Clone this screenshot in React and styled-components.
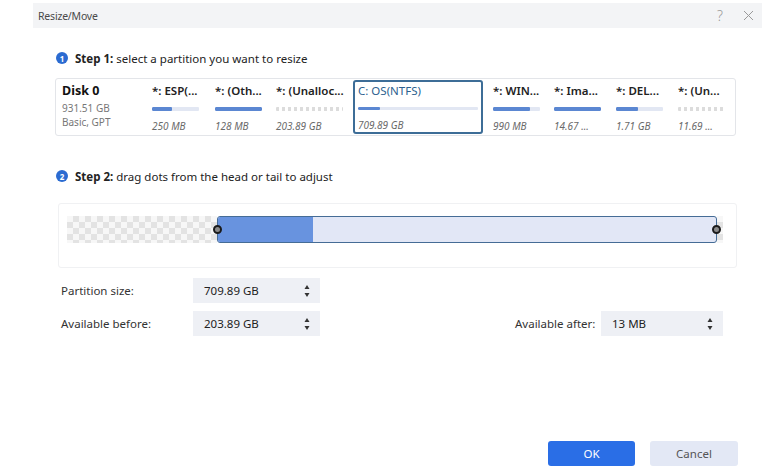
import React from "react";
import styled, { createGlobalStyle, css } from "styled-components";

const Global = createGlobalStyle`
  html, body { margin: 0; padding: 0; background: #fff; }
  body { font-family: "Noto Sans", "Open Sans", Arial, sans-serif; color: #222; }
  * { box-sizing: border-box; }
`;

const Dialog = styled.div`
  width: 768px;
  height: 475px;
  display: flex;
  flex-direction: column;
  background: #fff;
  overflow: hidden;
`;

const TitleBar = styled.div`
  margin: 3px 6px 0 33px;
  height: 25px;
  background: #f3f4f6;
  display: flex;
  align-items: center;
  padding: 0 0 0 5px;
`;

const Title = styled.div`
  flex: 1;
  font-size: 10.5px;
  color: #4a4a4a;
  letter-spacing: -0.2px;
`;

const TitleBtn = styled.div`
  width: 28px;
  display: flex;
  justify-content: center;
  align-items: center;
  color: #9a9a9a;
  font-size: 14px;
  font-weight: 300;
`;

const Content = styled.div`
  flex: 1;
  display: flex;
  flex-direction: column;
  padding-left: 55px;
`;

const StepRow = styled.div`
  display: flex;
  align-items: center;
  gap: 7px;
  height: 16px;
  margin-left: 1px;
  margin-top: ${(p) => p.$mt}px;
  font-size: 11.5px;
  color: #222;
  b { font-weight: 700; }
`;

const StepNum = styled.span`
  width: 12px;
  height: 12px;
  border-radius: 50%;
  background: #2b6bd1;
  color: #fff;
  font-size: 8px;
  font-weight: 700;
  display: flex;
  align-items: center;
  justify-content: center;
`;

const Panel = styled.div`
  margin-top: 12px;
  width: 681px;
  height: 58px;
  border: 1px solid #e3e5e9;
  border-radius: 3px;
  padding: 1px 0 1px 6px;
  display: flex;
`;

const DiskCell = styled.div`
  width: 90px;
  padding-top: 3px;
  display: flex;
  flex-direction: column;
`;

const DiskName = styled.div`
  font-size: 12.5px;
  font-weight: 700;
  line-height: 16px;
  color: #111;
`;

const DiskMeta = styled.div`
  font-size: 10px;
  line-height: 14px;
  color: #777;
  margin-top: ${(p) => p.$mt || 0}px;
`;

const Cell = styled.div`
  width: ${(p) => p.$w}px;
  padding-top: 3px;
  display: flex;
  flex-direction: column;
  ${(p) =>
    p.$selected &&
    css`
      border: 2px solid #3d6d97;
      border-radius: 3px;
      padding: 1px 4px 0 3px;
      margin-right: 10px;
    `}
`;

const CellName = styled.div`
  font-size: 11.5px;
  font-weight: ${(p) => (p.$selected ? 400 : 600)};
  line-height: 16px;
  color: ${(p) => (p.$selected ? "#2d5f8f" : "#222")};
  white-space: nowrap;
`;

const Bar = styled.div`
  margin-top: 8px;
  width: ${(p) => p.$w}px;
  height: 4px;
  border-radius: 1px;
  background: ${(p) =>
    p.$unalloc
      ? "repeating-linear-gradient(90deg, #dcdcdc 0 3px, transparent 3px 6px)"
      : "#e2e7f3"};
  overflow: hidden;
`;

const BarFill = styled.div`
  height: 100%;
  background: #5b87d2;
  border-radius: 1px;
`;

const CellSize = styled.div`
  margin-top: 8px;
  font-size: 10px;
  line-height: 14px;
  font-style: italic;
  color: #6a6a6a;
  white-space: nowrap;
`;

const SliderPanel = styled.div`
  margin: 19px 0 0 3px;
  width: 679px;
  height: 65px;
  border: 1px solid #f0f1f3;
  border-radius: 3px;
  padding: 12px 0 0 8px;
  display: flex;
`;

const checker = css`
  background-color: #f7f7f7;
  background-image: conic-gradient(#e3e3e3 25%, transparent 0 50%, #e3e3e3 0 75%, transparent 0);
  background-size: 12px 12px;
`;

const Empty = styled.div`
  width: ${(p) => p.$w}px;
  height: 27px;
  ${checker}
`;

const Track = styled.div`
  position: relative;
  width: 500px;
  height: 27px;
  border: 1.5px solid #456c96;
  border-radius: 3px;
  background: #e2e7f6;
  display: flex;
`;

const Used = styled.div`
  height: 100%;
  background: #6893df;
  border-radius: 2px 0 0 2px;
`;

const Handle = styled.div`
  position: absolute;
  top: 50%;
  ${(p) => (p.$side === "left" ? "left: -5px;" : "right: -5px;")}
  width: 9px;
  height: 9px;
  margin-top: -4.5px;
  border-radius: 50%;
  border: 2px solid #1a1a1a;
  background: #8a8a8a;
`;

const Form = styled.div`
  margin: 10px 0 0 6px;
  width: 662px;
  display: grid;
  grid-template-columns: 132px 127px 1fr 86px 122px;
  grid-auto-rows: 25px;
  row-gap: 8px;
  align-items: center;
  font-size: 11.5px;
  color: #333;
`;

const Label = styled.div`
  grid-column: ${(p) => p.$col};
`;

const Spin = styled.div`
  grid-column: ${(p) => p.$col};
  height: 25px;
  background: #eef0f5;
  display: flex;
  align-items: center;
  padding: 0 10px 0 11px;
  color: #222;
`;

const SpinVal = styled.span`
  flex: 1;
`;

const Arrows = styled.svg`
  width: 6px;
  height: 14px;
`;

const Footer = styled.div`
  margin-top: auto;
  margin-bottom: 9px;
  display: flex;
  justify-content: flex-end;
  gap: 15px;
  padding-right: 30px;
`;

const Button = styled.button`
  width: ${(p) => p.$w}px;
  height: 25px;
  border: none;
  border-radius: 3px;
  font-family: inherit;
  font-size: 11.5px;
  background: ${(p) => (p.$primary ? "#2a6ee6" : "#e3e8f5")};
  color: ${(p) => (p.$primary ? "#fff" : "#555")};
`;

const parts = [
  { name: "*: ESP(...", size: "250 MB", w: 63, bar: 47, fill: 42 },
  { name: "*: (Oth...", size: "128 MB", w: 61, bar: 47, fill: 100 },
  { name: "*: (Unalloc...", size: "203.89 GB", w: 77, bar: 67, unalloc: true },
  { name: "C: OS(NTFS)", size: "709.89 GB", w: 130, bar: 120, fill: 18, selected: true },
  { name: "*: WIN...", size: "990 MB", w: 61, bar: 47, fill: 78 },
  { name: "*: Ima...", size: "14.67 ...", w: 62, bar: 47, fill: 100 },
  { name: "*: DEL...", size: "1.71 GB", w: 62, bar: 47, fill: 46 },
  { name: "*: (Un...", size: "11.69 ...", w: 55, bar: 47, unalloc: true },
];

const SpinArrows = () => (
  <Arrows viewBox="0 0 6 14">
    <path d="M3 1 L5.5 5 L0.5 5 Z" fill="#333" />
    <path d="M3 13 L5.5 9 L0.5 9 Z" fill="#333" />
  </Arrows>
);

export default function App() {
  return (
    <>
      <Global />
      <Dialog>
        <TitleBar>
          <Title>Resize/Move</Title>
          <TitleBtn>?</TitleBtn>
          <TitleBtn>
            <svg width="11" height="11" viewBox="0 0 11 11">
              <path d="M1 1 L10 10 M10 1 L1 10" stroke="#9a9a9a" strokeWidth="1" />
            </svg>
          </TitleBtn>
        </TitleBar>
        <Content>
          <StepRow $mt={22}>
            <StepNum>1</StepNum>
            <span>
              <b>Step 1:</b> select a partition you want to resize
            </span>
          </StepRow>
          <Panel>
            <DiskCell>
              <DiskName>Disk 0</DiskName>
              <DiskMeta $mt={2}>931.51 GB</DiskMeta>
              <DiskMeta>Basic, GPT</DiskMeta>
            </DiskCell>
            {parts.map((p) => (
              <Cell key={p.name} $w={p.w} $selected={p.selected}>
                <CellName $selected={p.selected}>{p.name}</CellName>
                <Bar $w={p.bar} $unalloc={p.unalloc}>
                  {!p.unalloc && <BarFill style={{ width: `${p.fill}%` }} />}
                </Bar>
                <CellSize>{p.size}</CellSize>
              </Cell>
            ))}
          </Panel>
          <StepRow $mt={32}>
            <StepNum>2</StepNum>
            <span>
              <b>Step 2:</b> drag dots from the head or tail to adjust
            </span>
          </StepRow>
          <SliderPanel>
            <Empty $w={150} />
            <Track>
              <Used style={{ width: "95px" }} />
              <Handle $side="left" />
              <Handle $side="right" />
            </Track>
            <Empty $w={6} />
          </SliderPanel>
          <Form>
            <Label $col={1}>Partition size:</Label>
            <Spin $col={2}>
              <SpinVal>709.89 GB</SpinVal>
              <SpinArrows />
            </Spin>
            <Label $col={1}>Available before:</Label>
            <Spin $col={2}>
              <SpinVal>203.89 GB</SpinVal>
              <SpinArrows />
            </Spin>
            <Label $col={4}>Available after:</Label>
            <Spin $col={5}>
              <SpinVal>13 MB</SpinVal>
              <SpinArrows />
            </Spin>
          </Form>
          <Footer>
            <Button $primary $w={87}>OK</Button>
            <Button $w={88}>Cancel</Button>
          </Footer>
        </Content>
      </Dialog>
    </>
  );
}
